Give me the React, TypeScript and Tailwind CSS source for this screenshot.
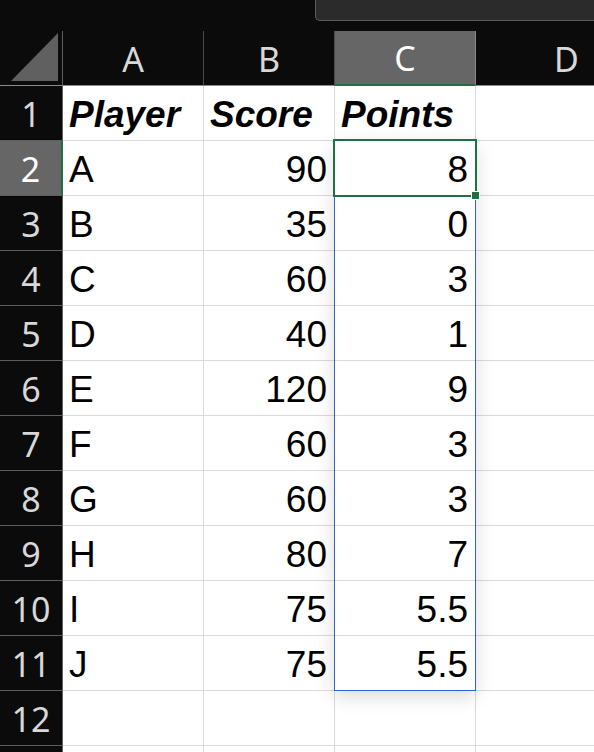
const rows: [string, string, string][] = [
  ["A", "90", "8"],
  ["B", "35", "0"],
  ["C", "60", "3"],
  ["D", "40", "1"],
  ["E", "120", "9"],
  ["F", "60", "3"],
  ["G", "60", "3"],
  ["H", "80", "7"],
  ["I", "75", "5.5"],
  ["J", "75", "5.5"],
];

const cell = "h-full shrink-0 border-b border-r border-[#dadada] flex items-center pt-[4px] text-[37px] text-black";
const rowHead =
  "w-[63px] h-full shrink-0 border-b border-r border-[#5e5e5e] flex items-center justify-center pt-[3px] text-[34px] font-['Noto_Sans',sans-serif]";

function ColHead({ label, width, active }: { label: string; width: string; active?: boolean }) {
  return (
    <div
      className={
        width +
        " h-full shrink-0 flex items-center justify-center pt-[2px] text-[34px] font-['Noto_Sans',sans-serif] border-r " +
        (active
          ? "bg-[#666666] text-white border-[#8a8a8a] border-b-2 border-b-[#1e7145]"
          : "text-[#d8d8d8] border-[#4a4a4a] border-b border-b-[#8a8a8a]")
      }
    >
      {label}
    </div>
  );
}

export default function App() {
  return (
    <div className="relative w-[594px] h-[752px] overflow-hidden bg-white font-['Liberation_Sans',Arial,sans-serif]">
      {/* top strip with formula box edge */}
      <div className="h-[31px] bg-[#0b0b0b] flex">
        <div className="ml-[315px] flex-1 h-[21px] bg-[#2b2b2b] border-l border-b border-[#5c5c5c] rounded-bl-[5px]" />
      </div>

      {/* column headers */}
      <div className="flex h-[55px] bg-[#0b0b0b]">
        <div className="w-[63px] h-full shrink-0 border-r border-b border-r-[#5e5e5e] border-b-[#8a8a8a] flex items-end justify-end pb-[3px] pr-[3px]">
          <svg width="48" height="49" viewBox="0 0 48 49">
            <polygon points="0,48 47,48 47,0" fill="#606060" />
          </svg>
        </div>
        <ColHead label="A" width="w-[141px]" />
        <ColHead label="B" width="w-[131px]" />
        <ColHead label="C" width="w-[141px]" active />
        <ColHead label="D" width="w-[182px]" />
      </div>

      {/* header row */}
      <div className="flex h-[55px]">
        <div className={rowHead + " text-[#d8d8d8] bg-[#0b0b0b]"}>1</div>
        <div className={cell + " w-[141px] pl-[6px] font-bold italic"}>Player</div>
        <div className={cell + " w-[131px] pl-[6px] font-bold italic"}>Score</div>
        <div className={cell + " w-[141px] pl-[6px] font-bold italic"}>Points</div>
        <div className={cell + " w-[182px]"} />
      </div>

      {rows.map(([p, s, pts], i) => {
        const active = i === 0;
        return (
          <div key={p} className="flex h-[55px]">
            <div
              className={
                rowHead +
                (active ? " bg-[#666666] text-white border-r-2 border-r-[#1e7145]" : " bg-[#0b0b0b] text-[#d8d8d8]")
              }
            >
              {i + 2}
            </div>
            <div className={cell + " w-[141px] pl-[6px]"}>{p}</div>
            <div className={cell + " w-[131px] justify-end pr-[7px]"}>{s}</div>
            <div className={cell + " w-[141px] justify-end pr-[7px]"}>{pts}</div>
            <div className={cell + " w-[182px]"} />
          </div>
        );
      })}

      {[12, 0].map((n) => (
        <div key={n} className="flex h-[55px]">
          <div className={rowHead + " bg-[#0b0b0b] text-[#d8d8d8]"}>{n > 0 ? n : ""}</div>
          <div className={cell + " w-[141px]"} />
          <div className={cell + " w-[131px]"} />
          <div className={cell + " w-[141px]"} />
          <div className={cell + " w-[182px]"} />
        </div>
      ))}

      {/* selected range C2:C11 */}
      <div className="absolute left-[334px] top-[140px] w-[142px] h-[551px] border border-[#2e62cf] shadow-[0_6px_18px_rgba(0,0,0,0.14)] pointer-events-none" />
      {/* active cell C2 */}
      <div className="absolute left-[333px] top-[139px] w-[144px] h-[58px] border-2 border-[#1e7145] pointer-events-none" />
      <div className="absolute left-[472px] top-[192px] w-[7px] h-[7px] bg-[#1e7145] outline outline-1 outline-white" />
    </div>
  );
}
